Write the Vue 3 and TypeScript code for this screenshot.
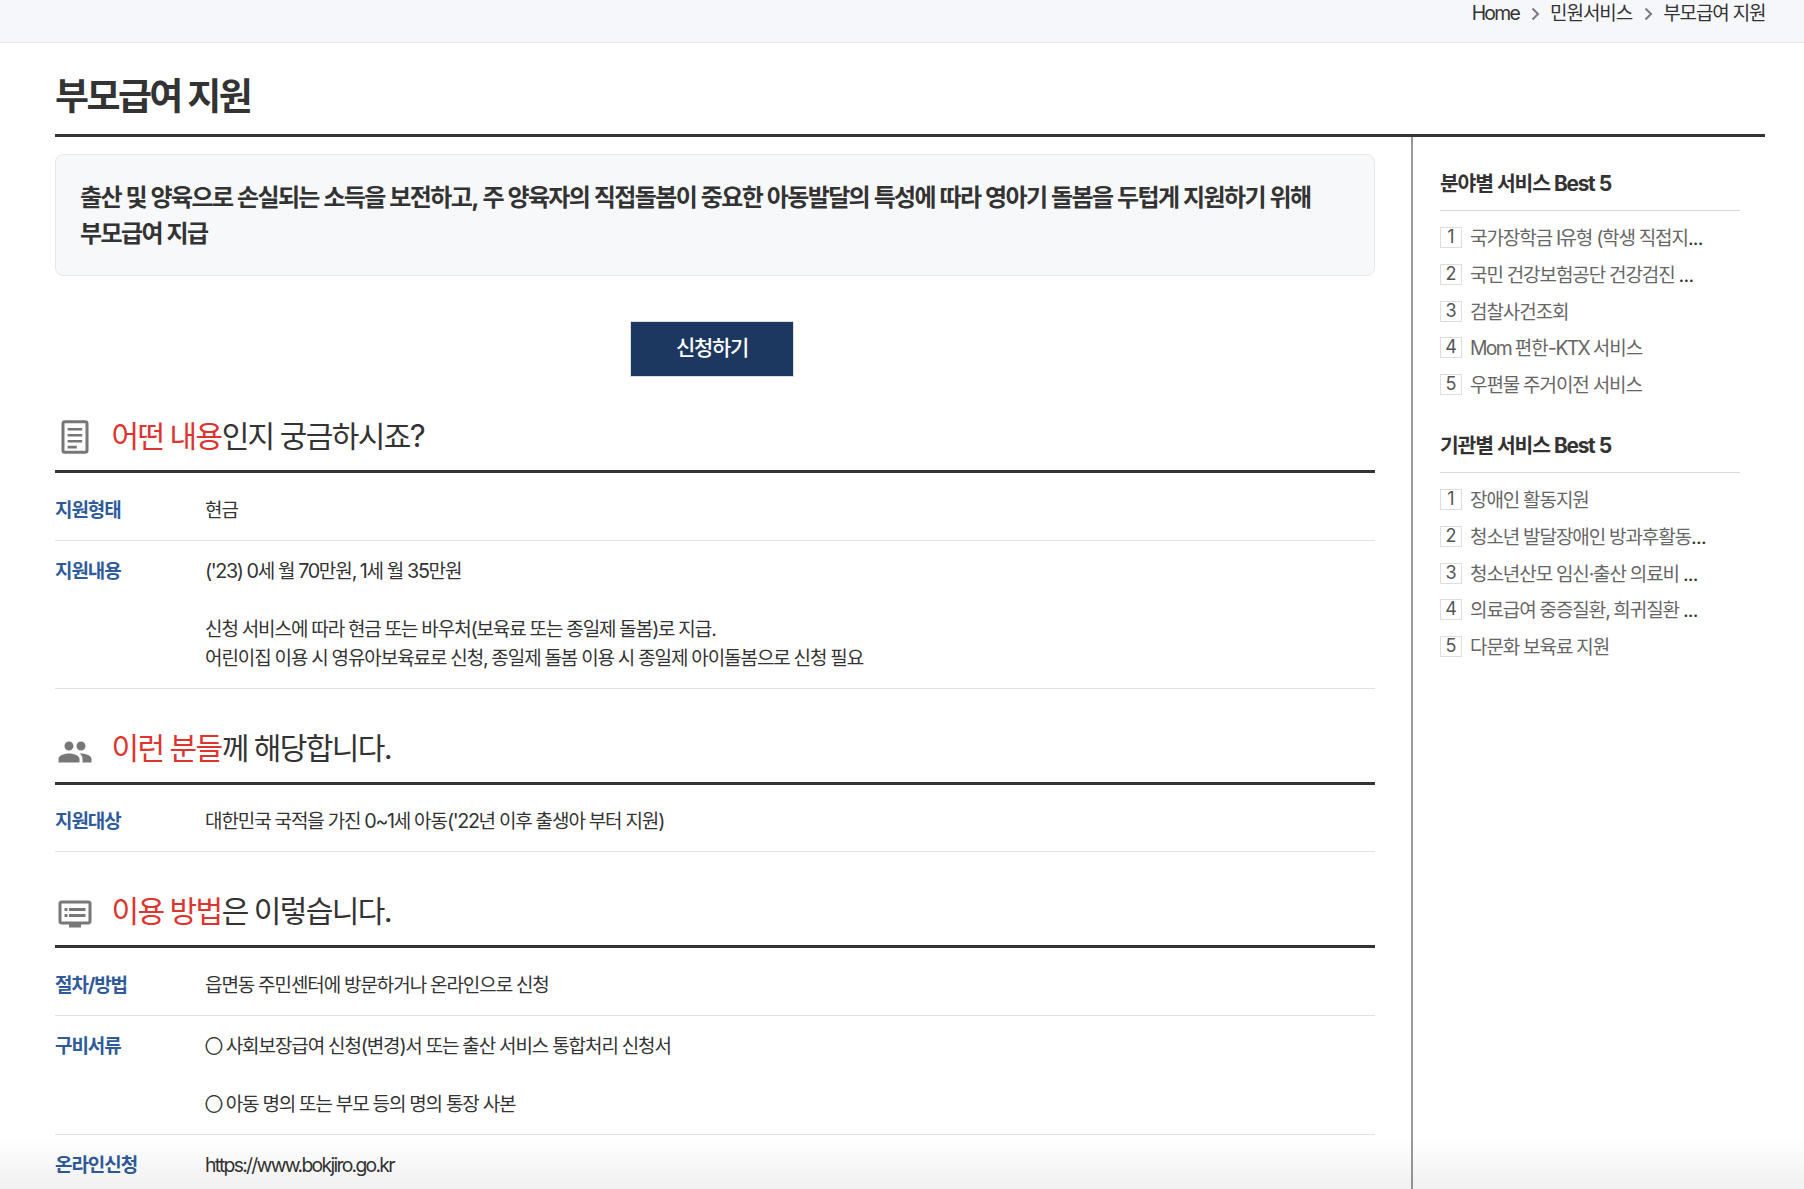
<script setup lang="ts">
import { h, type FunctionalComponent } from 'vue'

// Latin letters, digits and punctuation are set in their own face beside the Hangul.
const Txt: FunctionalComponent<{ t: string }> = (props) =>
  props.t
    .split(/([A-Za-z:/.]*[A-Za-z][A-Za-z:/.]*|[0-9'()~.,/:?·-]+|○)/)
    .filter((part) => part !== '')
    .map((part) => {
      if (part === '○') return h('span', { class: 'ring' }, part)
      if (/[A-Za-z]/.test(part)) return h('span', { class: 'lat abc' }, part)
      return /^[0-9'()~.,/:?·-]/.test(part) ? h('span', { class: 'lat' }, part) : part
    })
Txt.props = ['t']

interface Row {
  label: string
  lines: string[]
}
interface Section {
  icon: 'doc' | 'group' | 'guide'
  accent: string
  rest: string
  rows: Row[]
}
interface Best {
  title: string
  items: { text: string; cut?: boolean }[]
}

const crumbs: string[] = ['Home', '민원서비스', '부모급여 지원']

const sections: Section[] = [
  {
    icon: 'doc',
    accent: '어떤 내용',
    rest: '인지 궁금하시죠?',
    rows: [
      { label: '지원형태', lines: ['현금'] },
      {
        label: '지원내용',
        lines: [
          "('23) 0세 월 70만원, 1세 월 35만원",
          '',
          '신청 서비스에 따라 현금 또는 바우처(보육료 또는 종일제 돌봄)로 지급.',
          '어린이집 이용 시 영유아보육료로 신청, 종일제 돌봄 이용 시 종일제 아이돌봄으로 신청 필요',
        ],
      },
    ],
  },
  {
    icon: 'group',
    accent: '이런 분들',
    rest: '께 해당합니다.',
    rows: [{ label: '지원대상', lines: ["대한민국 국적을 가진 0~1세 아동('22년 이후 출생아 부터 지원)"] }],
  },
  {
    icon: 'guide',
    accent: '이용 방법',
    rest: '은 이렇습니다.',
    rows: [
      { label: '절차/방법', lines: ['읍면동 주민센터에 방문하거나 온라인으로 신청'] },
      {
        label: '구비서류',
        lines: ['○ 사회보장급여 신청(변경)서 또는 출산 서비스 통합처리 신청서', '', '○ 아동 명의 또는 부모 등의 명의 통장 사본'],
      },
      { label: '온라인신청', lines: ['https://www.bokjiro.go.kr'] },
    ],
  },
]

const best: Best[] = [
  {
    title: '분야별 서비스 Best 5',
    items: [
      { text: '국가장학금 I유형 (학생 직접지', cut: true },
      { text: '국민 건강보험공단 건강검진 ', cut: true },
      { text: '검찰사건조회' },
      { text: 'Mom 편한-KTX 서비스' },
      { text: '우편물 주거이전 서비스' },
    ],
  },
  {
    title: '기관별 서비스 Best 5',
    items: [
      { text: '장애인 활동지원' },
      { text: '청소년 발달장애인 방과후활동', cut: true },
      { text: '청소년산모 임신·출산 의료비 ', cut: true },
      { text: '의료급여 중증질환, 희귀질환 ', cut: true },
      { text: '다문화 보육료 지원' },
    ],
  },
]
</script>

<template>
  <div class="page">
    <nav class="crumbs">
      <template v-for="(c, i) in crumbs" :key="c">
        <svg v-if="i > 0" class="chev" width="9" height="14" viewBox="0 0 9 14">
          <path d="M1.5 1.5 7 7l-5.5 5.5" fill="none" stroke="#7d787c" stroke-width="2" />
        </svg>
        <span class="crumb"><Txt :t="c" /></span>
      </template>
    </nav>

    <div class="wrap">
      <h1 class="title">부모급여 지원</h1>
      <div class="cols">
        <main class="main">
          <div class="summary">
            <Txt t="출산 및 양육으로 손실되는 소득을 보전하고, 주 양육자의 직접돌봄이 중요한 아동발달의 특성에 따라 영아기 돌봄을 두텁게 지원하기 위해" /><br />
            <Txt t="부모급여 지급" />
          </div>
          <button class="apply" type="button">신청하기</button>

          <section v-for="s in sections" :key="s.icon" :class="['sec', s.icon]">
            <h2 class="sec-head">
              <svg v-if="s.icon === 'doc'" class="ico" width="36" height="36" viewBox="0 0 36 36">
                <rect x="6" y="2.8" width="24" height="30.4" rx="1.8" fill="none" stroke="#777" stroke-width="3" />
                <path d="M10.6 10.2h14.6M10.6 16.2h14.6M10.6 22.2h14.6M10.6 28.1h9.2" stroke="#777" stroke-width="2.6" />
              </svg>
              <svg v-else-if="s.icon === 'group'" class="ico" width="36" height="36" viewBox="0 0 24 24">
                <path
                  fill="#777"
                  d="M16 11c1.66 0 2.99-1.34 2.99-3S17.66 5 16 5c-1.66 0-3 1.34-3 3s1.34 3 3 3zm-8 0c1.66 0 2.99-1.34 2.99-3S9.66 5 8 5C6.34 5 5 6.34 5 8s1.34 3 3 3zm0 2c-2.33 0-7 1.17-7 3.5V19h14v-2.5c0-2.33-4.67-3.5-7-3.5zm8 0c-.29 0-.62.02-.97.05 1.16.84 1.97 1.97 1.97 3.45V19h6v-2.5c0-2.33-4.67-3.5-7-3.5z"
                />
              </svg>
              <svg v-else class="ico" width="36" height="36" viewBox="0 0 24 24">
                <path
                  fill="#777"
                  d="M21 3H3c-1.1 0-2 .9-2 2v12c0 1.1.9 2 2 2h5v2h8v-2h5c1.1 0 1.99-.9 1.99-2L23 5c0-1.1-.9-2-2-2zm0 14H3V5h18v12zm-2-9H8v2h11V8zm0 4H8v2h11v-2zM7 8H5v2h2V8zm0 4H5v2h2v-2z"
                />
              </svg>
              <span class="sec-title"><em>{{ s.accent }}</em><Txt :t="s.rest" /></span>
            </h2>
            <dl class="rows">
              <div v-for="r in s.rows" :key="r.label" class="row">
                <dt><Txt :t="r.label" /></dt>
                <dd>
                  <p v-for="(l, i) in r.lines" :key="i"><Txt :t="l" /></p>
                </dd>
              </div>
            </dl>
          </section>
        </main>

        <aside class="side">
          <section v-for="b in best" :key="b.title" class="best">
            <h3><Txt :t="b.title" /></h3>
            <ol>
              <li v-for="(it, i) in b.items" :key="it.text">
                <span class="num">{{ i + 1 }}</span>
                <span class="name"><Txt :t="it.text" /><span v-if="it.cut" class="lat dots">...</span></span>
              </li>
            </ol>
          </section>
        </aside>
      </div>
    </div>
    <div class="fade"></div>
  </div>
</template>

<style>
body {
  background: #fff;
}
.lat {
  font-family: Inter, 'Noto Sans CJK KR', sans-serif;
  font-size: 1.04em;
  line-height: 0;
  letter-spacing: -0.07em;
}
.lat.abc {
  font-size: 1.02em;
  letter-spacing: -0.088em;
}
.lat.dots {
  letter-spacing: -0.04em;
}
.ring {
  font-size: 0.94em;
  line-height: 0;
  -webkit-text-stroke: 0.6px #333;
}
</style>

<style scoped>
.page {
  position: relative;
  height: 1189px;
  overflow: hidden;
  color: #333;
  font-family: 'Noto Sans CJK KR', Inter, sans-serif;
  font-size: 19px;
  letter-spacing: -1.07px;
  word-spacing: 0.7px;
}
h1,
h2,
h3,
p,
dl,
dd,
ol {
  margin: 0;
  padding: 0;
}
.crumbs {
  display: flex;
  justify-content: flex-end;
  align-items: flex-start;
  box-sizing: border-box;
  height: 43px;
  padding-right: 38.5px;
  background: #f6f7fb;
  border-bottom: 1px solid #e5e7ea;
}
.crumb {
  height: 24px;
  line-height: 24px;
  white-space: nowrap;
}
.chev {
  margin: 7px 10px 0 12px;
}
.wrap {
  margin: 0 39px 0 55px;
}
.title {
  box-sizing: border-box;
  height: 94px;
  padding-top: 23px;
  border-bottom: 3px solid #333;
  font-size: 37px;
  font-weight: 700;
  line-height: 56px;
  letter-spacing: -2.6px;
}
.cols {
  display: flex;
  height: 1052px;
}
.main {
  width: 1320px;
  padding-top: 17px;
}
.summary {
  box-sizing: border-box;
  height: 122px;
  padding: 23px 24px 0;
  border: 1px solid #e5e7eb;
  border-radius: 8px;
  background: #f7f8fa;
  font-size: 24px;
  font-weight: 700;
  line-height: 36px;
  letter-spacing: -1.61px;
  word-spacing: 0.72px;
  white-space: nowrap;
}
.apply {
  display: block;
  width: 164px;
  height: 56px;
  margin: 45px 0 0 575px;
  padding: 0 0 5px;
  border: 1px solid #ddd;
  background: #1d3860;
  color: #fff;
  font: 500 21px/49px 'Noto Sans CJK KR', sans-serif;
  letter-spacing: -1.3px;
}
.sec-head {
  display: flex;
  box-sizing: border-box;
  height: 96px;
  border-bottom: 3px solid #333;
  font-size: 30px;
  font-weight: 400;
}
.ico {
  flex: none;
  margin: 41.5px 0 0 1.5px;
}
.group .ico {
  margin-top: 44.5px;
}
.guide .ico {
  margin-top: 43.5px;
}
.sec-title {
  margin: 35px 0 0 19px;
  line-height: 44px;
  letter-spacing: -1.6px;
  word-spacing: 1px;
}
.sec-title em {
  color: #dc3530;
  font-style: normal;
}
.rows {
  padding-top: 7px;
}
.group .rows {
  padding-top: 6px;
}
.row {
  display: flex;
  padding: 14px 0 17px;
  border-bottom: 1px solid #e1e1e1;
  line-height: 29px;
}
dt {
  width: 150px;
  color: #2f5b9b;
  font-weight: 700;
}
dd p {
  height: 29px;
  white-space: nowrap;
}
.side {
  width: 300px;
  margin-left: 36px;
  padding: 26px 0 0 27px;
  border-left: 2px solid #999;
}
.best {
  height: 262px;
}
.best h3 {
  box-sizing: border-box;
  height: 48px;
  border-bottom: 1px solid #d9d9d9;
  font-size: 20.4px;
  font-weight: 700;
  line-height: 38px;
  letter-spacing: -1.15px;
}
.best h3 :deep(.lat) {
  letter-spacing: -0.06em;
}
.best ol {
  padding-top: 8.25px;
  list-style: none;
}
.best li {
  display: flex;
  align-items: center;
  height: 36.75px;
}
.num {
  box-sizing: border-box;
  width: 22px;
  height: 21px;
  margin-right: 8px;
  border: 1px solid #ddd;
  color: #555;
  font: 18px/18px Inter, sans-serif;
  letter-spacing: 0;
  text-align: center;
}
.name {
  margin-top: -2px;
  color: #666;
  line-height: 29px;
  white-space: pre;
}
.dots {
  color: #333;
}
.fade {
  position: absolute;
  right: 0;
  bottom: 0;
  left: 0;
  height: 52px;
  background: linear-gradient(rgba(0, 0, 0, 0), rgba(0, 0, 0, 0.06));
}
</style>
